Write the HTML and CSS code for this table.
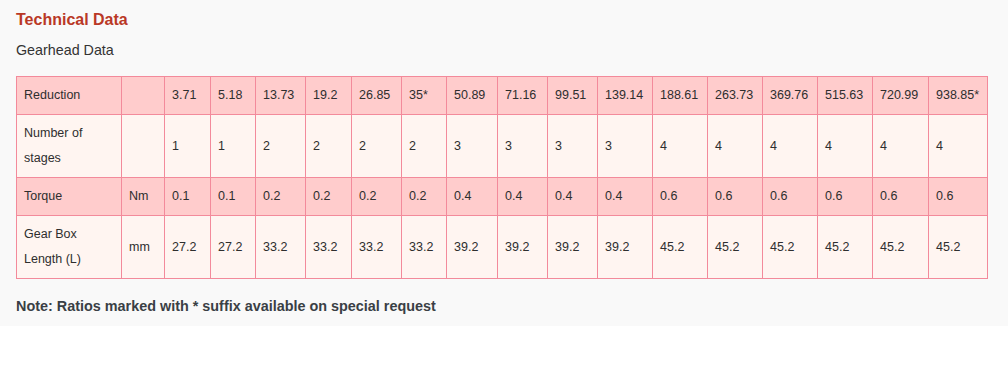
FILE: index.html
```html
<!DOCTYPE html>
<html>
<head>
<meta charset="utf-8">
<link rel="stylesheet" href="styles.css">
</head>
<body>
<div class="panel">
  <h2 class="title">Technical Data</h2>
  <p class="subtitle">Gearhead Data</p>
  <table class="data">
    <colgroup>
      <col style="width:105px"><col style="width:43px"><col style="width:46px"><col style="width:45px"><col style="width:50px"><col style="width:46px"><col style="width:50px"><col style="width:45px"><col style="width:51px"><col style="width:50px"><col style="width:50px"><col style="width:55px"><col style="width:55px"><col style="width:55px"><col style="width:55px"><col style="width:55px"><col style="width:56px"><col>
    </colgroup>
    <tr class="dark">
      <td>Reduction</td><td></td><td>3.71</td><td>5.18</td><td>13.73</td><td>19.2</td><td>26.85</td><td>35*</td><td>50.89</td><td>71.16</td><td>99.51</td><td>139.14</td><td>188.61</td><td>263.73</td><td>369.76</td><td>515.63</td><td>720.99</td><td>938.85*</td>
    </tr>
    <tr class="light">
      <td>Number of stages</td><td></td><td>1</td><td>1</td><td>2</td><td>2</td><td>2</td><td>2</td><td>3</td><td>3</td><td>3</td><td>3</td><td>4</td><td>4</td><td>4</td><td>4</td><td>4</td><td>4</td>
    </tr>
    <tr class="dark">
      <td>Torque</td><td>Nm</td><td>0.1</td><td>0.1</td><td>0.2</td><td>0.2</td><td>0.2</td><td>0.2</td><td>0.4</td><td>0.4</td><td>0.4</td><td>0.4</td><td>0.6</td><td>0.6</td><td>0.6</td><td>0.6</td><td>0.6</td><td>0.6</td>
    </tr>
    <tr class="light">
      <td>Gear Box Length (L)</td><td>mm</td><td>27.2</td><td>27.2</td><td>33.2</td><td>33.2</td><td>33.2</td><td>33.2</td><td>39.2</td><td>39.2</td><td>39.2</td><td>39.2</td><td>45.2</td><td>45.2</td><td>45.2</td><td>45.2</td><td>45.2</td><td>45.2</td>
    </tr>
  </table>
  <p class="note">Note: Ratios marked with * suffix available on special request</p>
</div>
</body>
</html>
```

FILE: styles.css
```css
html, body {
  margin: 0;
  padding: 0;
  background: #ffffff;
  font-family: "Liberation Sans", Arial, sans-serif;
  color: #333333;
}
.panel {
  background: #f9f9f9;
  padding: 11px 16px 1px 16px;
  box-sizing: border-box;
  height: 326px;
}
.title {
  margin: 0;
  font-size: 16px;
  font-weight: bold;
  line-height: 18px;
  color: #b93826;
}
.subtitle {
  margin: 13px 0 0 0;
  font-size: 14.3px;
  line-height: 16px;
  color: #333333;
}
.data {
  margin-top: 18px;
  width: 972px;
  table-layout: fixed;
  border-collapse: collapse;
  font-size: 12.5px;
  line-height: 25px;
  color: #2e2e2e;
}
.data td {
  border: 1px solid #f38a9b;
  padding: 6px 7px 6px 7px;
  vertical-align: middle;
  text-align: left;
  white-space: normal;
}
.data tr.dark td {
  background: #ffcccc;
}
.data tr.light td {
  background: #fff5f1;
}
.note {
  margin: 19px 0 0 0;
  font-size: 14.4px;
  font-weight: bold;
  line-height: 16px;
  color: #3a3f45;
}
```
